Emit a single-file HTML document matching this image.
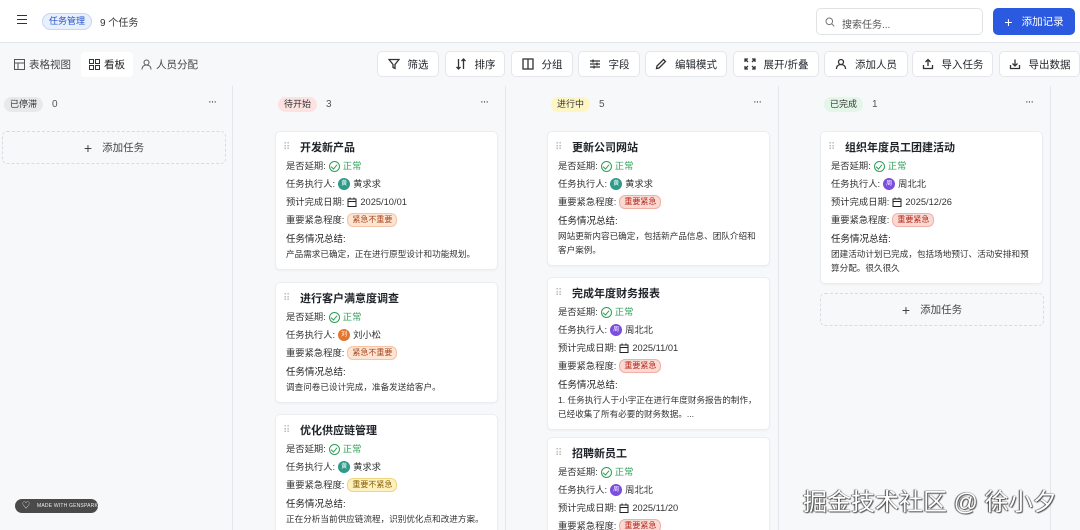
<!DOCTYPE html>
<html><head><meta charset="utf-8"><style>
*{box-sizing:border-box;margin:0;padding:0}
html{overflow:hidden;width:1080px;height:530px}
body{width:1080px;height:530px;overflow:hidden;background:#f7f8fa;font-family:"Liberation Sans","Noto Sans CJK SC",sans-serif;color:#1f2329;position:relative}
.top{position:absolute;left:0;top:0;width:1080px;height:43px;background:#fff;border-bottom:1px solid #e5e6eb}
.abs{position:absolute}
.chip{display:inline-block;border-radius:9px;padding:0 6px;font-size:9px;line-height:15px}
.btn{position:absolute;top:51px;height:26px;background:#fff;border:1px solid #e5e6eb;border-radius:5px;font-size:10.5px;display:flex;align-items:center;justify-content:center;gap:8px;color:#1f2329}
.btn svg{width:12px;height:12px;stroke:#333;fill:none;stroke-width:1.3}
.colline{position:absolute;top:86px;width:1px;height:444px;background:#e5e6eb}
.hdr{position:absolute;top:97px;font-size:10px;display:flex;align-items:center;gap:9px;color:#555}
.dots{position:absolute;top:96px;font-size:11px;color:#333;letter-spacing:-1px}
.card{position:absolute;width:223px;background:#fff;border:1px solid #ebedf0;border-radius:5px;padding:7px 10px 8px 10px;box-shadow:0 1px 2px rgba(0,0,0,.04)}
.ttl{height:18px;line-height:18px;font-size:11px;font-weight:bold;padding-left:14px;position:relative}
.ttl:before{content:"⠿";position:absolute;left:-3px;top:0;color:#bbb;font-weight:normal;font-size:10px}
.row{height:18px;line-height:18px;font-size:9.3px;color:#333;display:flex;align-items:center;gap:3px;white-space:nowrap}
.ok{color:#2f9e57;display:flex;align-items:center;gap:3px}
.ok i{width:11px;height:11px;border:1.2px solid #2f9e57;border-radius:50%;display:inline-block;position:relative}
.ok i:after{content:"";position:absolute;left:2.5px;top:1px;width:3px;height:5px;border:solid #2f9e57;border-width:0 1.2px 1.2px 0;transform:rotate(40deg)}
.av{width:12px;height:12px;border-radius:50%;display:inline-block;font-size:6px;color:#fff;text-align:center;line-height:12px}
.g{background:#2e9a8a}.p{background:#7b4ee0}.o{background:#e0762f}
.tag{font-size:8px;line-height:12px;padding:0 4px;border-radius:6px;border:1px solid}
.t1{background:#fde4d3;color:#a6461d;border-color:#f5c3a5}
.t2{background:#fbd9d3;color:#b3271b;border-color:#f1b0a6}
.t3{background:#fdf1c0;color:#8a5a00;border-color:#f0d580}
.sl{margin-top:4px;font-size:9.5px;line-height:14px;color:#222}
.st{font-size:8.6px;line-height:14px;color:#333}
.add{position:absolute;height:33px;border:1px dashed #d9dbe0;border-radius:5px;font-size:10.5px;color:#444;display:flex;align-items:center;justify-content:center;gap:10px}
.cal{width:10px;height:10px}
</style></head><body>
<div class="top">
 <div class="abs" style="left:17px;top:15px;width:10px;height:9px;border-top:1.5px solid #333;border-bottom:1.5px solid #333"><div style="margin-top:2.5px;border-top:1.5px solid #333"></div></div>
 <div class="abs chip" style="left:42px;top:13px;background:#e8f0fe;color:#2352c8;border:1px solid #c6d6f7">任务管理</div>
 <div class="abs" style="left:100px;top:14px;font-size:10px;color:#333">9 个任务</div>
 <div class="abs" style="left:816px;top:8px;width:167px;height:27px;border:1px solid #e0e2e6;border-radius:5px;font-size:10px;color:#555;padding:7px 0 0 25px">搜索任务...
  <svg class="abs" style="left:8px;top:8px" width="10" height="10" viewBox="0 0 10 10"><circle cx="4.3" cy="4.3" r="3.3" fill="none" stroke="#777" stroke-width="1"/><path d="M6.8 6.8L9.3 9.3" stroke="#777"/></svg></div>
 <div class="abs" style="left:993px;top:8px;width:82px;height:27px;background:#2b5ae0;border-radius:5px;color:#fff;font-size:10.5px;display:flex;align-items:center;justify-content:center;gap:9px"><span style="font-size:14px">+</span>添加记录</div>
</div>
<div class="abs" style="left:0;top:52px;width:206px;height:25px;display:flex;font-size:10.5px;color:#444;align-items:center">
 <div style="padding:0 10px 0 14px;display:flex;gap:4px;align-items:center"><svg width="11" height="11" viewBox="0 0 11 11" fill="none" stroke="#555"><rect x=".5" y=".5" width="10" height="10"/><path d="M.5 4h10M4 4v6.5"/></svg>表格视图</div>
 <div style="background:#fff;padding:5px 8px;border-radius:4px;display:flex;gap:4px;align-items:center;color:#222"><svg width="11" height="11" viewBox="0 0 11 11" fill="none" stroke="#333"><rect x=".5" y=".5" width="4" height="4"/><rect x="6.5" y=".5" width="4" height="4"/><rect x=".5" y="6.5" width="4" height="4"/><rect x="6.5" y="6.5" width="4" height="4"/></svg>看板</div>
 <div style="padding:0 8px;display:flex;gap:4px;align-items:center"><svg width="11" height="11" viewBox="0 0 11 11" fill="none" stroke="#555"><circle cx="5.5" cy="3.5" r="2.5"/><path d="M1 10.5c0-3 2-4.5 4.5-4.5s4.5 1.5 4.5 4.5"/></svg>人员分配</div>
</div>
<div class="btn" style="left:377px;width:62px"><svg viewBox="0 0 12 12"><path d="M1 1.5h10L7 6.5v4L5 9.5v-3z"/></svg>筛选</div>
<div class="btn" style="left:445px;width:60px"><svg viewBox="0 0 12 12"><path d="M3.5 1v10M1.5 9l2 2 2-2M8.5 11V1M6.5 3l2-2 2 2"/></svg>排序</div>
<div class="btn" style="left:511px;width:62px"><svg viewBox="0 0 12 12"><rect x="1" y="1" width="10" height="10"/><path d="M6 1v10"/></svg>分组</div>
<div class="btn" style="left:578px;width:62px"><svg viewBox="0 0 12 12"><path d="M1 3h10M1 6h10M1 9h10M4 1.5v3M8 4.5v3M5 7.5v3"/></svg>字段</div>
<div class="btn" style="left:645px;width:82px"><svg viewBox="0 0 12 12"><path d="M8.5 1.5l2 2L4 10l-2.5.5L2 8z"/></svg>编辑模式</div>
<div class="btn" style="left:733px;width:86px"><svg viewBox="0 0 12 12"><path d="M1 4V1h3M8 1h3v3M11 8v3H8M4 11H1V8M1 1l3 3M11 1L8 4M11 11L8 8M1 11l3-3"/></svg>展开/折叠</div>
<div class="btn" style="left:824px;width:84px"><svg viewBox="0 0 12 12"><circle cx="6" cy="4" r="2.5"/><path d="M1.5 11c0-3 2-4.5 4.5-4.5s4.5 1.5 4.5 4.5"/></svg>添加人员</div>
<div class="btn" style="left:912px;width:81px"><svg viewBox="0 0 12 12"><path d="M6 8V1.5M3.5 4L6 1.5 8.5 4M1.5 7v3.5h9V7"/></svg>导入任务</div>
<div class="btn" style="left:999px;width:81px"><svg viewBox="0 0 12 12"><path d="M6 1.5V8M3.5 5.5L6 8l2.5-2.5M1.5 7v3.5h9V7"/></svg>导出数据</div>

<div class="colline" style="left:232px"></div>
<div class="colline" style="left:505px"></div>
<div class="colline" style="left:778px"></div>
<div class="colline" style="left:1050px"></div>

<div class="hdr" style="left:4px"><span class="chip" style="background:#e8e9eb;color:#333">已停滞</span>0</div><div class="dots" style="left:208px">···</div>
<div class="hdr" style="left:278px"><span class="chip" style="background:#fde2e2;color:#333">待开始</span>3</div><div class="dots" style="left:480px">···</div>
<div class="hdr" style="left:551px"><span class="chip" style="background:#fdf6c3;color:#333">进行中</span>5</div><div class="dots" style="left:753px">···</div>
<div class="hdr" style="left:824px"><span class="chip" style="background:#e3f6e8;color:#333">已完成</span>1</div><div class="dots" style="left:1025px">···</div>

<div class="add" style="left:2px;top:131px;width:224px"><span style="font-size:14px">+</span>添加任务</div>

<div class="card" style="left:275px;top:131px">
 <div class="ttl">开发新产品</div>
 <div class="row">是否延期: <span class="ok"><i></i>正常</span></div>
 <div class="row">任务执行人: <span class="av g">黄</span>黄求求</div>
 <div class="row">预计完成日期: <svg class="cal" viewBox="0 0 10 10" fill="none" stroke="#222"><rect x="1" y="2" width="8" height="7.5"/><path d="M1 4.5h8M3 .5v2M7 .5v2"/></svg>2025/10/01</div>
 <div class="row">重要紧急程度: <span class="tag t1">紧急不重要</span></div>
 <div class="sl">任务情况总结:</div><div class="st">产品需求已确定，正在进行原型设计和功能规划。</div>
</div>
<div class="card" style="left:275px;top:282px">
 <div class="ttl">进行客户满意度调查</div>
 <div class="row">是否延期: <span class="ok"><i></i>正常</span></div>
 <div class="row">任务执行人: <span class="av o">刘</span>刘小松</div>
 <div class="row">重要紧急程度: <span class="tag t1">紧急不重要</span></div>
 <div class="sl">任务情况总结:</div><div class="st">调查问卷已设计完成，准备发送给客户。</div>
</div>
<div class="card" style="left:275px;top:414px">
 <div class="ttl">优化供应链管理</div>
 <div class="row">是否延期: <span class="ok"><i></i>正常</span></div>
 <div class="row">任务执行人: <span class="av g">黄</span>黄求求</div>
 <div class="row">重要紧急程度: <span class="tag t3">重要不紧急</span></div>
 <div class="sl">任务情况总结:</div><div class="st" style="white-space:nowrap">正在分析当前供应链流程，识别优化点和改进方案。</div>
</div>

<div class="card" style="left:547px;top:131px">
 <div class="ttl">更新公司网站</div>
 <div class="row">是否延期: <span class="ok"><i></i>正常</span></div>
 <div class="row">任务执行人: <span class="av g">黄</span>黄求求</div>
 <div class="row">重要紧急程度: <span class="tag t2">重要紧急</span></div>
 <div class="sl">任务情况总结:</div><div class="st">网站更新内容已确定，包括新产品信息、团队介绍和客户案例。</div>
</div>
<div class="card" style="left:547px;top:277px">
 <div class="ttl">完成年度财务报表</div>
 <div class="row">是否延期: <span class="ok"><i></i>正常</span></div>
 <div class="row">任务执行人: <span class="av p">周</span>周北北</div>
 <div class="row">预计完成日期: <svg class="cal" viewBox="0 0 10 10" fill="none" stroke="#222"><rect x="1" y="2" width="8" height="7.5"/><path d="M1 4.5h8M3 .5v2M7 .5v2"/></svg>2025/11/01</div>
 <div class="row">重要紧急程度: <span class="tag t2">重要紧急</span></div>
 <div class="sl">任务情况总结:</div><div class="st">1. 任务执行人于小宇正在进行年度财务报告的制作，已经收集了所有必要的财务数据。...</div>
</div>
<div class="card" style="left:547px;top:437px;height:110px">
 <div class="ttl">招聘新员工</div>
 <div class="row">是否延期: <span class="ok"><i></i>正常</span></div>
 <div class="row">任务执行人: <span class="av p">周</span>周北北</div>
 <div class="row">预计完成日期: <svg class="cal" viewBox="0 0 10 10" fill="none" stroke="#222"><rect x="1" y="2" width="8" height="7.5"/><path d="M1 4.5h8M3 .5v2M7 .5v2"/></svg>2025/11/20</div>
 <div class="row">重要紧急程度: <span class="tag t2">重要紧急</span></div>
</div>

<div class="card" style="left:820px;top:131px">
 <div class="ttl">组织年度员工团建活动</div>
 <div class="row">是否延期: <span class="ok"><i></i>正常</span></div>
 <div class="row">任务执行人: <span class="av p">周</span>周北北</div>
 <div class="row">预计完成日期: <svg class="cal" viewBox="0 0 10 10" fill="none" stroke="#222"><rect x="1" y="2" width="8" height="7.5"/><path d="M1 4.5h8M3 .5v2M7 .5v2"/></svg>2025/12/26</div>
 <div class="row">重要紧急程度: <span class="tag t2">重要紧急</span></div>
 <div class="sl">任务情况总结:</div><div class="st">团建活动计划已完成，包括场地预订、活动安排和预算分配。很久很久</div>
</div>
<div class="add" style="left:820px;top:293px;width:224px"><span style="font-size:14px">+</span>添加任务</div>

<div class="abs" style="left:15px;top:499px;width:83px;height:14px;background:#4a4a4a;border-radius:7px;color:#eee;font-size:5px;line-height:14px;padding-left:22px;letter-spacing:.2px;white-space:nowrap;overflow:hidden">MADE WITH GENSPARK<span class="abs" style="left:7px;top:0;font-size:8px">♡</span></div>
<div class="abs" style="left:803px;top:482px;font-size:24px;color:#fff;white-space:nowrap;text-shadow:0 0 1px #333,1px 1px 1px #555,-1px 0 1px #555">掘金技术社区 @ 徐小夕</div>
</body></html>
